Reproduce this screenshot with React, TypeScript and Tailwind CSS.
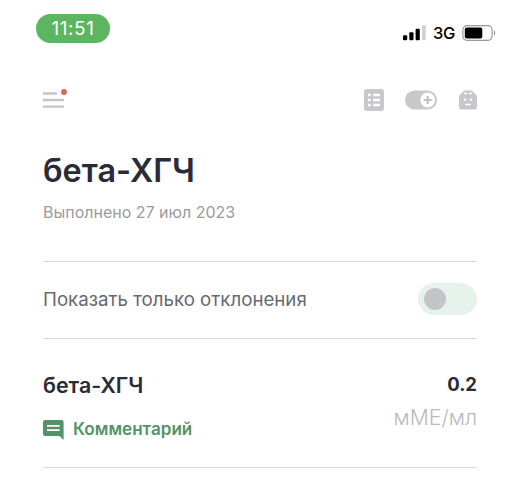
import type { ReactNode } from 'react';

interface TestResult {
  id: string;
  name: string;
  value: string;
  unit: string;
}

const results: TestResult[] = [{ id: 'bhcg', name: 'бета-ХГЧ', value: '0.2', unit: 'мМЕ/мл' }];

function StatusBar() {
  return (
    <div className="flex h-[29px] items-center justify-between pl-9 pr-[22px]">
      <div className="flex h-[29px] w-[74px] items-center justify-center rounded-full bg-[#5cb55f] text-[19px] leading-none tracking-[0.6px] text-white">
        11:51
      </div>
      <div className="mt-[9px] flex items-center">
        <svg width="23" height="16" viewBox="0 0 23 16">
          <rect x="0" y="10.3" width="4.2" height="5" rx="1" fill="#000" />
          <rect x="6.3" y="7.3" width="4.2" height="8" rx="1" fill="#000" />
          <rect x="12.6" y="3.8" width="4.2" height="11.5" rx="1" fill="#000" />
          <rect x="19" y="0.3" width="3.8" height="15" rx="1" fill="#d2d2d2" />
        </svg>
        <span className="ml-[7px] w-[22px] whitespace-nowrap text-[16.5px] font-medium leading-none tracking-[-0.3px] text-black">
          3G
        </span>
        <svg className="ml-[7px]" width="35" height="16" viewBox="0 0 35 16">
          <rect x="0.9" y="0.7" width="29.2" height="14.6" rx="4" fill="none" stroke="#9b9b9b" strokeWidth="1.2" />
          <rect x="2.8" y="2.6" width="17.5" height="10.8" rx="2" fill="#000" />
          <path d="M32 5.5c1.6.6 1.6 4.4 0 5z" fill="#8f8f8f" />
        </svg>
      </div>
    </div>
  );
}

function Toolbar() {
  return (
    <div className="flex h-[22px] items-center justify-between">
      {/* Menu with unread dot */}
      <svg width="25" height="22" viewBox="0 0 25 22">
        <path d="M0 4.5h14M0 11h21M0 17.6h21" stroke="#c5c5c9" strokeWidth="2.4" />
        <circle cx="21" cy="3" r="2.9" fill="#d5694f" />
      </svg>
      <div className="flex items-center">
        <svg width="20" height="22" viewBox="0 0 20 22">
          <rect width="20" height="22" rx="3" fill="#c8c8cc" />
          <path d="M4 6h2.6M4 11h2.6M4 16h2.6M9 6h7M9 11h7M9 16h7" stroke="#fff" strokeWidth="2.3" />
        </svg>
        <svg className="ml-[21px]" width="32" height="20" viewBox="0 0 32 20">
          <rect y="0.5" width="32" height="19" rx="9.5" fill="#c8c8cc" />
          <circle cx="22.7" cy="10" r="7.4" fill="#fff" />
          <path d="M22.7 5.9v8.2M18.6 10h8.2" stroke="#c0c0c5" strokeWidth="2.2" />
        </svg>
        <svg className="ml-[22px]" width="18" height="20" viewBox="0 0 18 20">
          <path
            d="M0 6L4.4 1.3Q5 .6 6 .6h6q1 0 1.6.7L18 6v11a2.5 2.5 0 0 1-2.5 2.5h-13A2.5 2.5 0 0 1 0 17z"
            fill="#c8c8cc"
          />
          <path d="M4.8 3.5h3.4M9.8 3.5h3.4" stroke="#fff" strokeWidth="1.7" />
          <circle cx="6" cy="9.6" r="1.2" fill="#fff" />
          <circle cx="12" cy="9.6" r="1.2" fill="#fff" />
          <path d="M6.8 14.6h4.4" stroke="#fff" strokeWidth="1.5" strokeLinecap="round" />
        </svg>
      </div>
    </div>
  );
}

function Section({ children }: { children: ReactNode }) {
  return <section className="border-b-[1.5px] border-[#d9d9da]">{children}</section>;
}

function ResultRow({ result }: { result: TestResult }) {
  return (
    <div className="flex h-[128px] justify-between pt-[32px]">
      <div>
        <h2 className="text-[21.4px] font-semibold leading-[28px] text-[#2b2a38]">{result.name}</h2>
        <button className="mt-[18px] flex h-6 items-center text-[17.1px] font-semibold text-[#53936a]">
          <svg className="mr-[9px] mt-px" width="21" height="20" viewBox="0 0 21 20">
            <path d="M2 0h16.6a2 2 0 0 1 2 2v18l-4.1-4H2a2 2 0 0 1-2-2V2a2 2 0 0 1 2-2z" fill="#53936a" />
            <path d="M4 5.8h12.6M4 10.2h12.6" stroke="#fff" strokeWidth="1.8" />
          </svg>
          Комментарий
        </button>
      </div>
      <div className="text-right">
        <div className="h-7 text-[18.5px] font-bold leading-[27px] text-[#2b2a38]">{result.value}</div>
        <div className="mt-[4px] text-[21.2px] font-light leading-[29px] text-[#bababa]">{result.unit}</div>
      </div>
    </div>
  );
}

export default function App() {
  return (
    <div className="h-[500px] w-[519px] overflow-hidden bg-white pt-[14px] font-['Inter',sans-serif]">
      <StatusBar />
      <main className="ml-[43px] mt-[46px] w-[434px]">
        <Toolbar />
        <Section>
          <div className="h-[150px] pt-[40px]">
            <h1 className="text-[32.4px] font-semibold leading-10 text-[#2b2a38]">бета-ХГЧ</h1>
            <p className="mt-[9px] text-[16px] leading-6 text-[#9b9b9d]">Выполнено 27 июл 2023</p>
          </div>
        </Section>
        <Section>
          <div className="flex h-[76px] items-center justify-between">
            <span className="text-[18.7px] text-[#68686f]">Показать только отклонения</span>
            <div className="mb-[2px] flex h-8 w-[59px] items-center rounded-full bg-[#e8f2ed] pl-[6px]">
              <div className="size-[22px] rounded-full bg-[#c3c5c8]" />
            </div>
          </div>
        </Section>
        {results.map((result) => (
          <Section key={result.id}>
            <ResultRow result={result} />
          </Section>
        ))}
      </main>
    </div>
  );
}
